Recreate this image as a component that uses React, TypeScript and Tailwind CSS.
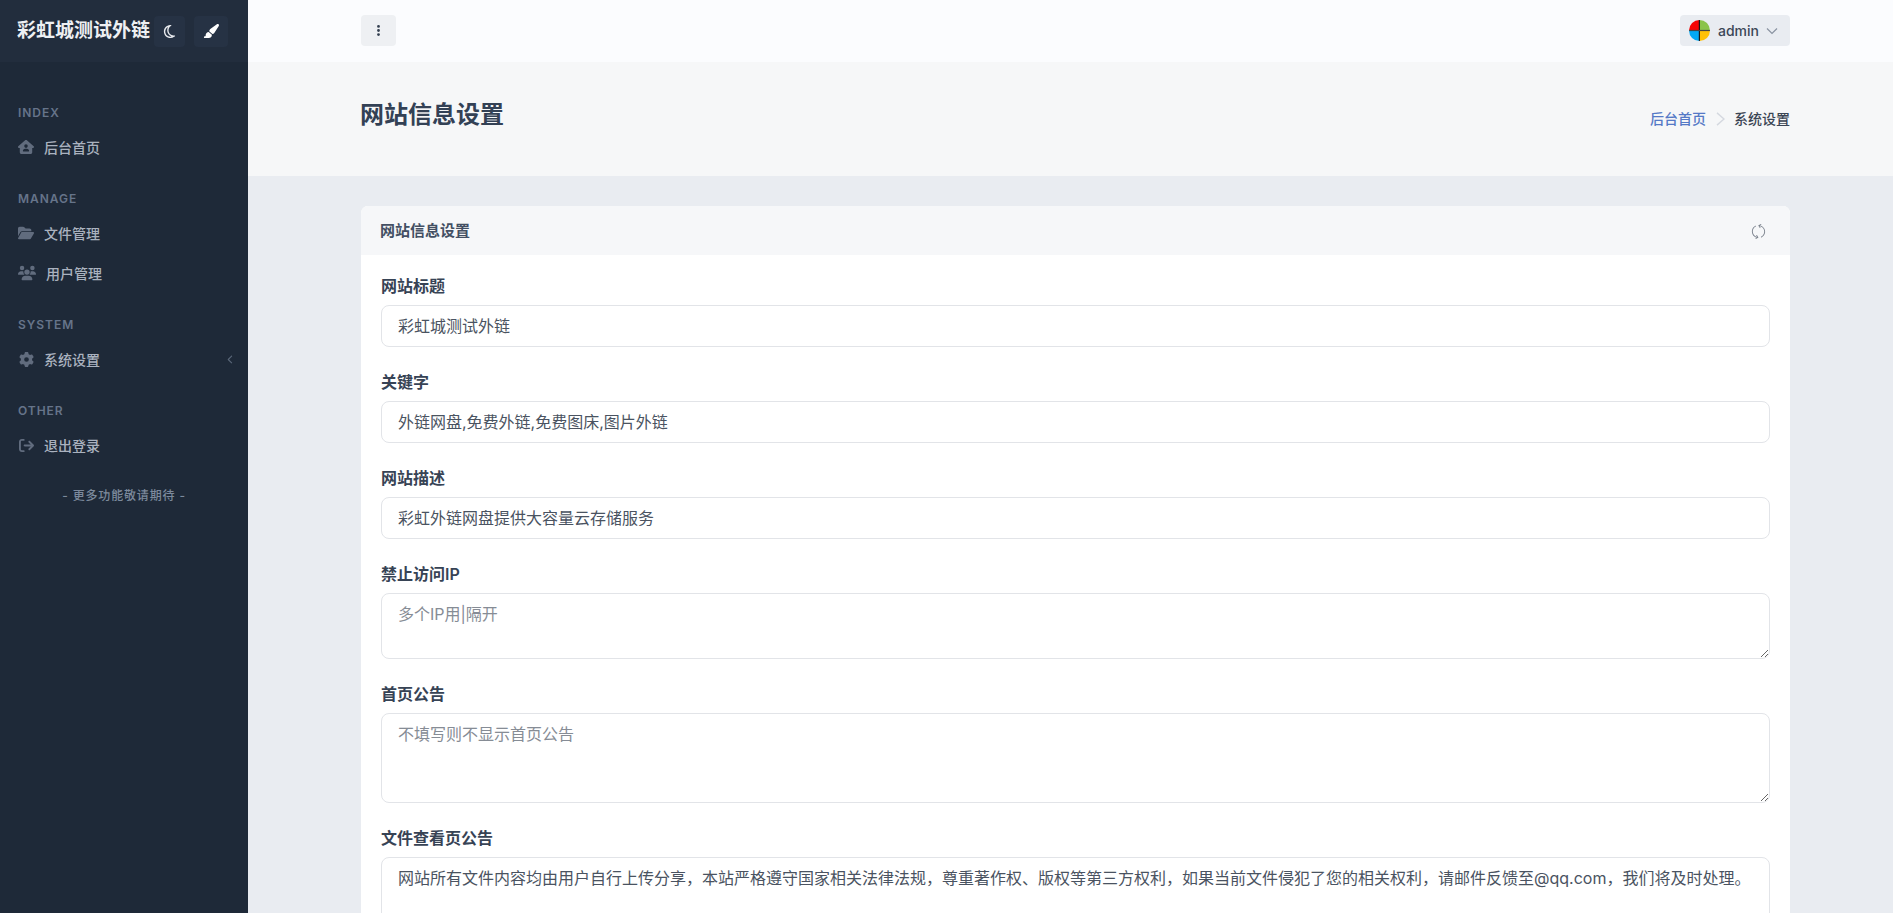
import { FaHouseUser, FaFolderOpen, FaUsers, FaGear, FaArrowRightFromBracket, FaRegMoon, FaPaintbrush, FaEllipsisVertical, FaChevronLeft } from "react-icons/fa6";
import { SlRefresh } from "react-icons/sl";
import type { ReactNode } from "react";

const nav = [
  { title: "INDEX", items: [{ icon: <FaHouseUser className="text-[16px]" />, label: "后台首页" }] },
  {
    title: "MANAGE",
    items: [
      { icon: <FaFolderOpen className="text-[16px]" />, label: "文件管理" },
      { icon: <FaUsers className="w-[18px] text-[18px]" />, label: "用户管理" },
    ],
  },
  { title: "SYSTEM", items: [{ icon: <FaGear className="text-[15px]" />, label: "系统设置", arrow: true }] },
  { title: "OTHER", items: [{ icon: <FaArrowRightFromBracket className="text-[15px]" />, label: "退出登录" }] },
];

function Sidebar() {
  return (
    <aside className="flex w-[248px] shrink-0 flex-col bg-[#1e2938]">
      <div className="flex h-[62px] items-center bg-[#222d3d] pl-[17px]">
        <span className="w-[136px] shrink-0 whitespace-nowrap text-[19px] font-bold text-[#eef0f3]">彩虹城测试外链</span>
        <button className="ml-[1px] flex h-[31px] w-[31px] items-center justify-center rounded-[4px] bg-[#263244] text-[15px] text-[#e8eaee]">
          <FaRegMoon />
        </button>
        <button className="ml-[9px] flex h-[31px] w-[34px] items-center justify-center rounded-[4px] bg-[#263244] text-[16px] text-white">
          <FaPaintbrush />
        </button>
      </div>
      <nav className="pt-[34px]">
        {nav.map((group) => (
          <div key={group.title} className="mb-[14px]">
            <div className="flex h-8 items-center pl-[18px] pt-[2px] text-[12px] font-semibold tracking-[0.08em] text-[#66748a]">
              {group.title}
            </div>
            {group.items.map((item) => (
              <div key={item.label} className="flex h-10 items-center pb-[2px] pl-[18px] pr-[13px] text-[14px] font-medium text-[#aab2bf]">
                <span className="mr-[10px] flex min-w-4 justify-center text-[#616c7e]">{item.icon}</span>
                <span>{item.label}</span>
                {"arrow" in item && <FaChevronLeft className="ml-auto text-[9px] text-[#5a6779]" />}
              </div>
            ))}
          </div>
        ))}
      </nav>
      <div className="mt-[7px] text-center text-[12px] font-medium tracking-[0.07em] text-[#7c899c]">- 更多功能敬请期待 -</div>
    </aside>
  );
}

function Avatar() {
  return (
    <svg viewBox="0 0 21 21" className="h-[21px] w-[21px]">
      <clipPath id="av"><circle cx="10.5" cy="10.5" r="10.5" /></clipPath>
      <g clipPath="url(#av)">
        <rect width="10.5" height="10.5" fill="#f50505" />
        <rect x="10.5" width="10.5" height="10.5" fill="#8bc34a" />
        <rect y="10.5" width="10.5" height="10.5" fill="#03a9f4" />
        <rect x="10.5" y="10.5" width="10.5" height="10.5" fill="#ffc107" />
        <rect x="9.8" width="1.2" height="21" fill="#1a1a1a" />
        <rect y="9.9" width="21" height="1.2" fill="#444" />
      </g>
    </svg>
  );
}

function Field({ label, children }: { label: string; children: ReactNode }) {
  return (
    <div className="mb-6">
      <label className="mb-[6px] block h-6 text-[16px] font-semibold leading-[22px] text-[#374355]">{label}</label>
      {children}
    </div>
  );
}

const inputClass =
  "block w-full rounded-[8px] border border-[#e2e4e8] bg-white px-4 py-2 text-[16px] leading-6 text-[#4a5361] outline-none placeholder:text-[#868c95]";

export default function App() {
  return (
    <div className="flex h-screen overflow-hidden bg-[#e9ecf1] font-[Inter,'Noto_Sans_CJK_SC',sans-serif]">
      <Sidebar />
      <main className="min-w-0 flex-1">
        <header className="flex h-[62px] items-center justify-between bg-[#fbfcfe] pb-[1px] pl-[113px] pr-[103px]">
          <button className="flex h-[31px] w-[35px] items-center justify-center rounded-[4px] bg-[#eef0f3] pr-[1px] text-[13px] text-[#333f50]">
            <FaEllipsisVertical />
          </button>
          <button className="flex h-[31px] w-[110px] items-center rounded-[4px] bg-[#e9ecf1] pl-[9px] text-[14px] font-medium text-[#3c4757]">
            <Avatar />
            <span className="ml-2">admin</span>
            <svg viewBox="0 0 12 8" className="ml-[7px] h-[8px] w-[12px] text-[#8a93a1]" fill="none" stroke="currentColor" strokeWidth="1.2">
              <path d="M1 1.5l5 5 5-5" />
            </svg>
          </button>
        </header>
        <section className="flex h-[114px] items-start justify-between bg-[#f6f7f8] pl-[113px] pr-[103px]">
          <h1 className="-ml-px mt-[36px] text-[24px] font-bold leading-[34px] text-[#334155]">网站信息设置</h1>
          <div className="mt-[46px] flex items-center text-[14px] font-medium leading-[22px]">
            <span className="text-[#5579c6]">后台首页</span>
            <svg viewBox="0 0 10 16" className="ml-[10px] mr-[9px] h-[14px] w-[9px] text-[#d5d9e0]" fill="none" stroke="currentColor" strokeWidth="1.6">
              <path d="M1 1l8 7-8 7" />
            </svg>
            <span className="text-[#3b4554]">系统设置</span>
          </div>
        </section>
        <div className="pl-[113px] pr-[103px] pt-[30px]">
          <div className="rounded-[7px] bg-white">
            <div className="flex h-[49px] items-center justify-between rounded-t-[7px] bg-[#f6f7f9] pl-[19px] pr-6 pt-[1px]">
              <h3 className="text-[15px] font-semibold text-[#434f63]">网站信息设置</h3>
              <SlRefresh className="text-[15px] text-[#7b828d]" />
            </div>
            <form className="px-5 pt-5">
              <Field label="网站标题">
                <input className={inputClass} readOnly defaultValue="彩虹城测试外链" />
              </Field>
              <Field label="关键字">
                <input className={inputClass} readOnly defaultValue="外链网盘,免费外链,免费图床,图片外链" />
              </Field>
              <Field label="网站描述">
                <input className={inputClass} readOnly defaultValue="彩虹外链网盘提供大容量云存储服务" />
              </Field>
              <Field label="禁止访问IP">
                <textarea className={`${inputClass} h-[66px] resize-y`} readOnly placeholder="多个IP用|隔开" />
              </Field>
              <Field label="首页公告">
                <textarea className={`${inputClass} h-[90px] resize-y`} readOnly placeholder="不填写则不显示首页公告" />
              </Field>
              <Field label="文件查看页公告">
                <textarea
                  className={`${inputClass} h-[90px] resize-y`}
                  readOnly
                  defaultValue="网站所有文件内容均由用户自行上传分享，本站严格遵守国家相关法律法规，尊重著作权、版权等第三方权利，如果当前文件侵犯了您的相关权利，请邮件反馈至@qq.com，我们将及时处理。"
                />
              </Field>
            </form>
          </div>
        </div>
      </main>
    </div>
  );
}
